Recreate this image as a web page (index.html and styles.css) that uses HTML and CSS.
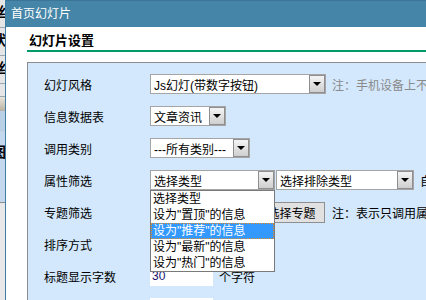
FILE: index.html
```html
<!DOCTYPE html>
<html lang="zh-CN">
<head>
    <meta charset="UTF-8">
    <title>首页幻灯片</title>
    <link rel="stylesheet" href="styles.css">
</head>
<body>

    <!-- pedaço da página de trás -->
    <div class="side">
        <div class="side-cell"><span>丝</span></div>
        <div class="side-cell"><span>状</span></div>
        <div class="side-cell"><span>丝</span></div>
        <div class="side-gap"></div>
        <div class="side-band"></div>
        <div class="side-blue"></div>
        <div class="side-light"><span>图</span></div>
        <div class="side-rest"></div>
    </div>

    <div class="win">
        <div class="titlebar">首页幻灯片</div>

        <div class="content">
            <h2 class="heading">幻灯片设置</h2>

            <div class="panel">
                <div class="row">
                    <div class="label">幻灯风格</div>
                    <div class="sel w176"><span class="txt">Js幻灯(带数字按钮)</span><span class="btn"></span></div>
                    <span class="note">注：手机设备上不支持</span>
                </div>
                <div class="row">
                    <div class="label">信息数据表</div>
                    <div class="sel w76"><span class="txt">文章资讯</span><span class="btn"></span></div>
                </div>
                <div class="row">
                    <div class="label">调用类别</div>
                    <div class="sel w100"><span class="txt">---所有类别---</span><span class="btn"></span></div>
                </div>
                <div class="row">
                    <div class="label">属性筛选</div>
                    <div class="sel w125 open">
                        <span class="txt">选择类型</span><span class="btn"></span>
                        <ul class="droplist">
                            <li>选择类型</li>
                            <li>设为"置顶"的信息</li>
                            <li class="hover">设为"推荐"的信息</li>
                            <li>设为"最新"的信息</li>
                            <li>设为"热门"的信息</li>
                        </ul>
                    </div>
                    <div class="sel w138"><span class="txt">选择排除类型</span><span class="btn"></span></div>
                    <span class="after">自定义</span>
                </div>
                <div class="row">
                    <div class="label">专题筛选</div>
                    <input class="inp w105" type="text">
                    <button class="pick">选择专题</button>
                    <span class="note dark">注：表示只调用属于该专题的信息</span>
                </div>
                <div class="row">
                    <div class="label">排序方式</div>
                </div>
                <div class="row">
                    <div class="label">标题显示字数</div>
                    <input class="inp w63" type="text" value="30">
                    <span class="after">个字符</span>
                </div>
                <div class="row">
                    <div class="label">图片显示宽度</div>
                    <input class="inp w63" type="text">
                </div>
            </div>
        </div>
    </div>

</body>
</html>
```

FILE: styles.css
```css
   body {
       margin: 0;
       display: flex;
       height: 300px;
       overflow: hidden;
       font-family: "Liberation Sans", "Noto Sans CJK SC", sans-serif;
       font-size: 12px;
       color: #000;
       background-color: #fff;
   }

   /* faixa da página de trás */
   .side {
       width: 5px;
       flex-shrink: 0;
       border-right: 1px solid #3f7fa6;
       background-color: #e6e6e6;
       display: flex;
       flex-direction: column;
       overflow: hidden;
   }
   .side-cell {
       height: 27px;
       flex-shrink: 0;
       border-bottom: 1px solid #9aa7b0;
       overflow: hidden;
       font-size: 14px;
       line-height: 24px;
   }
   .side-cell span, .side-light span {
       display: block;
       margin-left: -8px;
       font-weight: bold;
   }
   .side-gap {
       height: 12px;
       flex-shrink: 0;
       border-bottom: 1px solid #9aa7b0;
   }
   .side-band {
       height: 14px;
       flex-shrink: 0;
       background: linear-gradient(#e8e4da, #b9b2a2);
   }
   .side-blue {
       height: 20px;
       flex-shrink: 0;
       background-color: #b8cfe6;
       border-bottom: 1px solid #c6d2de;
   }
   .side-light {
       height: 70px;
       flex-shrink: 0;
       background-color: #c3d8ee;
       border-bottom: 1px solid #8d8d8d;
       font-size: 14px;
       line-height: 40px;
       overflow: hidden;
   }
   .side-rest {
       flex: 1;
       background-color: #e8e8e8;
   }

   /* janela */
   .win {
       flex: 1;
       min-width: 0;
       overflow: hidden;
       display: flex;
       flex-direction: column;
   }
   .titlebar {
       height: 27px;
       flex-shrink: 0;
       line-height: 27px;
       padding-left: 5px;
       background-color: #4585a8;
       border-top: 1px solid #3c7597;
       box-sizing: border-box;
       color: #fff;
       font-size: 12px;
   }
   .content {
       flex: 1;
       padding: 5px 0 0 21px;
   }
   .heading {
       margin: 0;
       padding-left: 2px;
       height: 18px;
       line-height: 18px;
       font-size: 13px;
       font-weight: bold;
       border-bottom: 2px solid #009a6a;
   }
   .panel {
       margin-top: 10px;
       height: 300px;
       padding: 5px 0 0 16px;
       background-color: #d3e8fc;
       border-top: 1px solid #8c8c8c;
       border-left: 1px solid #8c8c8c;
   }
   .row {
       height: 32px;
       display: flex;
       align-items: center;
       white-space: nowrap;
   }
   .label {
       width: 106px;
       flex-shrink: 0;
   }

   /* select à moda antiga */
   .sel {
       position: relative;
       height: 20px;
       box-sizing: border-box;
       display: flex;
       align-items: center;
       justify-content: space-between;
       background-color: #fff;
       border: 1px solid #a5a5a5;
       flex-shrink: 0;
   }
   .sel .txt {
       padding-left: 3px;
       overflow: hidden;
   }
   .sel .btn {
       position: relative;
       width: 16px;
       height: 18px;
       box-sizing: border-box;
       border: 1px solid #8f8f8f;
       background: linear-gradient(#f4f4f4, #cfcfcf);
   }
   .sel .btn::after {
       content: "";
       position: absolute;
       left: 3px;
       top: 6px;
       border-left: 4px solid transparent;
       border-right: 4px solid transparent;
       border-top: 4px solid #000;
   }
   .w176 { width: 176px; }
   .w76 { width: 76px; }
   .w100 { width: 100px; }
   .w125 { width: 125px; }
   .w138 { width: 138px; margin-left: 1px; }
   .w105 { width: 105px; }
   .w63 { width: 63px; }

   .droplist {
       position: absolute;
       left: -1px;
       top: 19px;
       width: 125px;
       box-sizing: border-box;
       margin: 0;
       padding: 0;
       list-style: none;
       background-color: #fff;
       border: 1px solid #7a7a7a;
       z-index: 5;
   }
   .droplist li {
       height: 16px;
       line-height: 16px;
       padding-left: 2px;
   }
   .droplist li.hover {
       background-color: #3399ff;
       color: #fff;
       outline: 1px dotted #e08a2c;
       outline-offset: -1px;
   }

   .note {
       margin-left: 6px;
       color: #8a8a8a;
   }
   .note.dark {
       color: #000;
       margin-left: 7px;
   }
   .after {
       margin-left: 6px;
   }
   .inp {
       height: 20px;
       box-sizing: border-box;
       border: none;
       padding: 0 2px;
       background-color: #fff;
       font-family: "Liberation Sans", "Noto Sans CJK SC", sans-serif;
       font-size: 12px;
       color: #14146e;
       flex-shrink: 0;
   }
   .pick {
       height: 21px;
       width: 67px;
       flex-shrink: 0;
       margin-left: 3px;
       padding: 0;
       border: 1px solid #8f8f8f;
       background-color: #e1e1e1;
       font-family: "Liberation Sans", "Noto Sans CJK SC", sans-serif;
       font-size: 12px;
       color: #000;
   }
```
